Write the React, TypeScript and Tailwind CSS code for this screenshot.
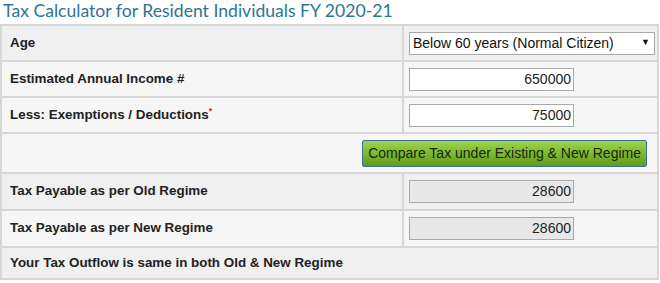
import type { ReactNode } from "react";

// ─── Row ──────────────────────────────────────────────────────────────────────
function Row({
  label,
  children,
  bg = "bg-[#f0f0f0]",
  h = "h-[34px]",
}: {
  label: ReactNode;
  children?: ReactNode;
  bg?: string;
  h?: string;
}) {
  return (
    <div className={`flex gap-[2px] ${h}`}>
      <div className={`${bg} w-[400px] flex items-center pl-[8px] font-bold text-[13.4px] text-[#222]`}>
        {label}
      </div>
      <div className={`${bg} flex-1 flex items-center pl-[5px]`}>{children}</div>
    </div>
  );
}

function NumBox({ value, readOnly }: { value: string; readOnly?: boolean }) {
  return (
    <div
      className={`w-[165px] h-[23px] border text-[14px] text-[#222] flex items-center justify-end pr-[2px] ${
        readOnly ? "bg-[#e8e8e8] border-[#a9a9a9]" : "bg-white border-[#a9a9a9]"
      }`}
    >
      {value}
    </div>
  );
}

export default function App() {
  return (
    <div className="w-[660px] h-[283px] bg-white overflow-hidden font-['Liberation_Sans',Arial,sans-serif]">
      <h1 className="font-['Lato',sans-serif] text-[17.6px] leading-[22px] text-[#2b7595] pl-[3px] h-[24px]">
        Tax Calculator for Resident Individuals FY 2020-21
      </h1>
      <div className="w-[659px] bg-[#d6d6d6] p-[2px] flex flex-col gap-[2px]">
        <Row label="Age">
          <div className="w-[246px] h-[23px] bg-white border border-[#a9a9a9] flex items-center justify-between pl-[3px] pr-[4px] text-[14px] text-[#111]">
            <span>Below 60 years (Normal Citizen)</span>
            <span className="text-[9px]">▼</span>
          </div>
        </Row>
        <Row label="Estimated Annual Income #" bg="bg-[#f6f6f6]">
          <NumBox value="650000" />
        </Row>
        <Row
          label={
            <span>
              Less: Exemptions / Deductions<span className="text-[#d22] text-[9px] align-top">*</span>
            </span>
          }
          bg="bg-[#f6f6f6]"
        >
          <NumBox value="75000" />
        </Row>
        <div className="h-[38px] bg-[#f6f6f6] flex items-center justify-end pr-[10px]">
          <button className="h-[27px] px-[5px] border border-[#3d6f9e] rounded-[2px] bg-gradient-to-b from-[#9fd44a] to-[#5f9c19] text-[14px] text-[#15260a]">
            Compare Tax under Existing &amp; New Regime
          </button>
        </div>
        <Row label="Tax Payable as per Old Regime" h="h-[35px]">
          <NumBox value="28600" readOnly />
        </Row>
        <Row label="Tax Payable as per New Regime" bg="bg-[#f6f6f6]" h="h-[35px]">
          <NumBox value="28600" readOnly />
        </Row>
        <div className="h-[30px] bg-[#f0f0f0] flex items-center pl-[8px] font-bold text-[13.4px] text-[#222]">
          Your Tax Outflow is same in both Old &amp; New Regime
        </div>
      </div>
    </div>
  );
}
